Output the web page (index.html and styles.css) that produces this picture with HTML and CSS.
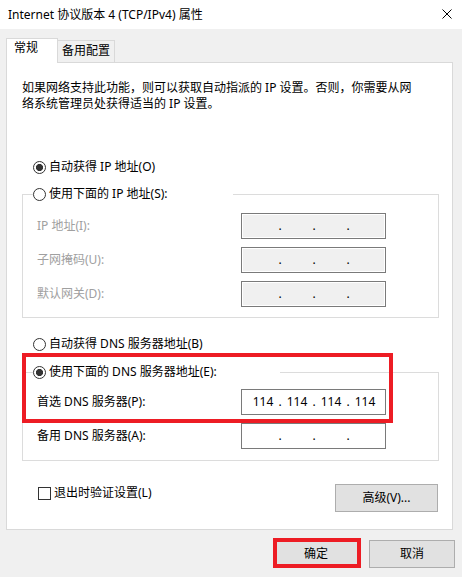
FILE: index.html
```html
<!DOCTYPE html>
<html lang="zh-CN">
<head>
<meta charset="utf-8">
<title>Internet 协议版本 4 (TCP/IPv4) 属性</title>
<link rel="stylesheet" href="styles.css">
</head>
<body>
<div class="window">
  <div class="titlebar">
    <span class="title">Internet 协议版本 4 (TCP/IPv4) 属性</span>
    <svg class="close" width="10" height="10" viewBox="0 0 10 10"><path d="M0.5 0.5L9.5 9.5M9.5 0.5L0.5 9.5" stroke="#000" stroke-width="1" fill="none"/></svg>
  </div>
  <div class="tabs">
    <div class="tab active">常规</div>
    <div class="tab">备用配置</div>
  </div>
  <div class="panel">
    <p class="desc">如果网络支持此功能，则可以获取自动指派的 IP 设置。否则，你需要从网<br>络系统管理员处获得适当的 IP 设置。</p>
    <div class="opt first-opt"><span class="radio checked"></span>自动获得 IP 地址(O)</div>
    <fieldset class="group g1">
      <legend class="opt legend1"><span class="radio"></span>使用下面的 IP 地址(S):</legend>
      <div class="row disabled"><span class="lbl">IP 地址(I):</span><div class="ipbox off"><span class="seg"></span><span class="dot">.</span><span class="seg"></span><span class="dot">.</span><span class="seg"></span><span class="dot">.</span><span class="seg"></span></div></div>
      <div class="row disabled"><span class="lbl">子网掩码(U):</span><div class="ipbox off"><span class="seg"></span><span class="dot">.</span><span class="seg"></span><span class="dot">.</span><span class="seg"></span><span class="dot">.</span><span class="seg"></span></div></div>
      <div class="row disabled"><span class="lbl">默认网关(D):</span><div class="ipbox off"><span class="seg"></span><span class="dot">.</span><span class="seg"></span><span class="dot">.</span><span class="seg"></span><span class="dot">.</span><span class="seg"></span></div></div>
    </fieldset>
    <div class="opt dns-opt"><span class="radio"></span>自动获得 DNS 服务器地址(B)</div>
    <fieldset class="group g2">
      <legend class="opt legend2"><span class="radio checked"></span>使用下面的 DNS 服务器地址(E):</legend>
      <div class="row"><span class="lbl">首选 DNS 服务器(P):</span><div class="ipbox"><span class="seg">114</span><span class="dot">.</span><span class="seg">114</span><span class="dot">.</span><span class="seg">114</span><span class="dot">.</span><span class="seg">114</span></div></div>
      <div class="row"><span class="lbl">备用 DNS 服务器(A):</span><div class="ipbox"><span class="seg"></span><span class="dot">.</span><span class="seg"></span><span class="dot">.</span><span class="seg"></span><span class="dot">.</span><span class="seg"></span></div></div>
    </fieldset>
    <div class="footer-row">
      <label class="chk"><span class="check"></span>退出时验证设置(L)</label>
      <button class="btn adv">高级(V)...</button>
    </div>
  </div>
  <div class="actions">
    <button class="btn dlg">确定</button>
    <button class="btn dlg">取消</button>
  </div>
  <div class="mark mark-dns"></div>
  <div class="mark mark-ok"></div>
</div>
</body>
</html>
```
FILE: styles.css
```css
* { box-sizing: border-box; }
html, body { margin: 0; padding: 0; }
body {
  background: #f0f0f0;
  font-family: "Noto Sans", "Noto Sans CJK SC", sans-serif;
  font-size: 12px;
  color: #000;
}
.window {
  position: relative;
  width: 462px;
  height: 577px;
  overflow: hidden;
}
.titlebar {
  height: 29px;
  background: #fff;
  display: flex;
  align-items: center;
  justify-content: space-between;
  padding: 0 10px 0 8px;
}
.title { line-height: 16px; }
.close { display: block; margin-top: -1px; }

.tabs {
  display: flex;
  align-items: flex-end;
  height: 24px;
  margin-top: 9px;
  padding-left: 6px;
  position: relative;
  z-index: 1;
}
.tab {
  height: 22px;
  width: 58px;
  margin-left: -1px;
  border: 1px solid #d9d9d9;
  border-bottom: none;
  background: #f0f0f0;
  padding-left: 4px;
  line-height: 20px;
}
.tab.active {
  height: 25px;
  width: 52px;
  margin-left: 0;
  margin-bottom: -1px;
  background: #fff;
  padding-left: 7px;
  line-height: 18px;
  position: relative;
  z-index: 2;
}

.panel {
  margin-left: 6px;
  width: 447px;
  background: #fff;
  border: 1px solid #d9d9d9;
}
.desc {
  margin: 17px 0 0 15px;
  line-height: 16px;
  white-space: nowrap;
}
.opt {
  display: flex;
  align-items: center;
  height: 20px;
  line-height: 20px;
  white-space: nowrap;
}
.first-opt { margin: 45px 0 0 26px; }
.dns-opt { margin: 16px 0 0 26px; }
.radio {
  flex: none;
  width: 13px;
  height: 13px;
  border: 1px solid #333;
  border-radius: 50%;
  background: #fff;
  margin-right: 3px;
}
.radio.checked {
  background: radial-gradient(circle, #333 0, #333 3.2px, #fff 3.9px);
}

.group {
  margin: 7px 0 0 15px;
  width: 417px;
  min-width: 0;
  border: 1px solid #dcdcdc;
  padding: 9px 0 10px 0;
}
.g2 { margin-top: 8px; padding: 7px 0 11px 0; }
.group legend {
  padding: 0;
  margin-left: 10px;
}
.legend1 { width: 200px; }
.legend2 { width: 247px; }

.row {
  display: grid;
  grid-template-columns: 204px 145px;
  align-items: center;
  height: 26px;
  padding-left: 14px;
}
.row + .row { margin-top: 8px; }
.lbl { line-height: 20px; white-space: nowrap; }
.disabled .lbl { color: #a0a0a0; }

.ipbox {
  height: 26px;
  border: 1px solid #7a7a7a;
  background: #fff;
  display: flex;
  padding-left: 5px;
  line-height: 24px;
}
.ipbox.off {
  background: #f0f0f0;
  box-shadow: inset 0 0 0 1px #fff;
}
.seg { width: 32px; text-align: center; }
.dot { width: 2px; display: flex; justify-content: center; }

.footer-row {
  display: flex;
  justify-content: space-between;
  align-items: center;
  height: 28px;
  margin: 23px 14px 17px 31px;
}
.chk {
  display: flex;
  align-items: center;
  align-self: flex-start;
  margin-top: -1px;
  line-height: 20px;
}
.check {
  width: 13px;
  height: 13px;
  border: 1px solid #333;
  background: #fff;
  margin-right: 3px;
}
.btn {
  font: inherit;
  color: #000;
  height: 28px;
  padding: 0;
  border: 1px solid #adadad;
  background: #e1e1e1;
  line-height: 26px;
  text-align: center;
}
.adv { width: 103px; }
.actions {
  display: flex;
  justify-content: flex-end;
  gap: 10px;
  margin: 10px 7px 0 0;
}
.dlg { width: 86px; }

.mark {
  position: absolute;
  border: 4px solid #ed1c24;
}
.mark-dns { left: 22px; top: 353px; width: 371px; height: 70px; }
.mark-ok { left: 273px; top: 538px; width: 88px; height: 30px; }
```
